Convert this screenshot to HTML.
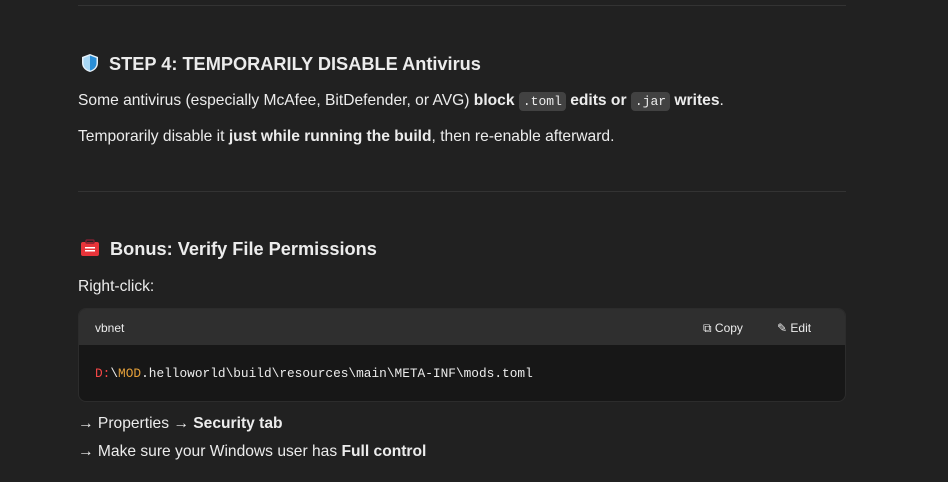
<!DOCTYPE html>
<html><head><meta charset="utf-8"><style>
body{margin:0;background:#212121;width:948px;height:482px;overflow:hidden;font-family:"Liberation Sans",sans-serif;color:#ececec;position:relative}
.a{position:absolute;white-space:nowrap}
hr{position:absolute;left:78px;width:768px;border:0;border-top:1px solid #333;margin:0}
h3{position:absolute;margin:0;font-size:18.2px;font-weight:bold;left:80px;white-space:nowrap}
p{position:absolute;margin:0;left:78px;font-size:15.6px;white-space:nowrap}
code{font-family:"Liberation Mono",monospace;font-size:13px;background:#424242;padding:2px 4px;border-radius:4px;font-weight:normal}
.code{position:absolute;left:78px;top:308px;width:768px;height:94px;border-radius:8px;background:#171717;border:1px solid #2c2c2c;box-sizing:border-box;overflow:hidden}
.hd{height:36px;background:#2f2f2f;font-size:12px;position:relative}
</style></head><body>
<hr style="top:5px">
<h3 style="top:53px"><svg width="20" height="20" viewBox="0 0 20 20" style="vertical-align:-3px;margin-right:9px"><path d="M10 1 L18 4 V10 C18 15 14 18 10 19 C6 18 2 15 2 10 V4 Z" fill="#e6f0f8"/><path d="M10 2.5 L16.5 5 V10 C16.5 14 13.5 16.8 10 17.6 Z" fill="#2a8fd8"/><path d="M10 2.5 L3.5 5 V10 C3.5 14 6.5 16.8 10 17.6 Z" fill="#a8d8f5"/></svg>STEP 4: TEMPORARILY DISABLE Antivirus</h3>
<p style="top:92px">Some antivirus (especially McAfee, BitDefender, or AVG) <b>block <code>.toml</code> edits or <code>.jar</code> writes</b>.</p>
<p style="top:128px">Temporarily disable it <b>just while running the build</b>, then re-enable afterward.</p>
<hr style="top:191px">
<h3 style="top:239px"><svg width="20" height="18" viewBox="0 0 20 18" style="vertical-align:-2px;margin-right:10px"><rect x="1" y="3" width="18" height="14" rx="2" fill="#e8343a"/><rect x="6" y="1" width="8" height="3" rx="1" fill="none" stroke="#7a2030" stroke-width="1.5"/><rect x="5" y="8" width="10" height="1.5" fill="#fff"/><rect x="5" y="11" width="10" height="1.5" fill="#fff"/></svg>Bonus: Verify File Permissions</h3>
<p style="top:278px">Right-click:</p>
<div class="code"><div class="hd"><span class="a" style="left:16px;top:12px">vbnet</span><span class="a" style="left:624px;top:12px">⧉ Copy</span><span class="a" style="left:698px;top:12px">✎ Edit</span></div>
<div class="a" style="left:16px;top:57px;font-family:'Liberation Mono',monospace;font-size:12.8px"><span style="color:#f44747">D:</span>\<span style="color:#e5a03a">MOD</span>.helloworld\build\resources\main\META-INF\mods.toml</div></div>
<p style="top:415px">→ Properties → <b>Security tab</b></p>
<p style="top:443px">→ Make sure your Windows user has <b>Full control</b></p>
</body></html>
